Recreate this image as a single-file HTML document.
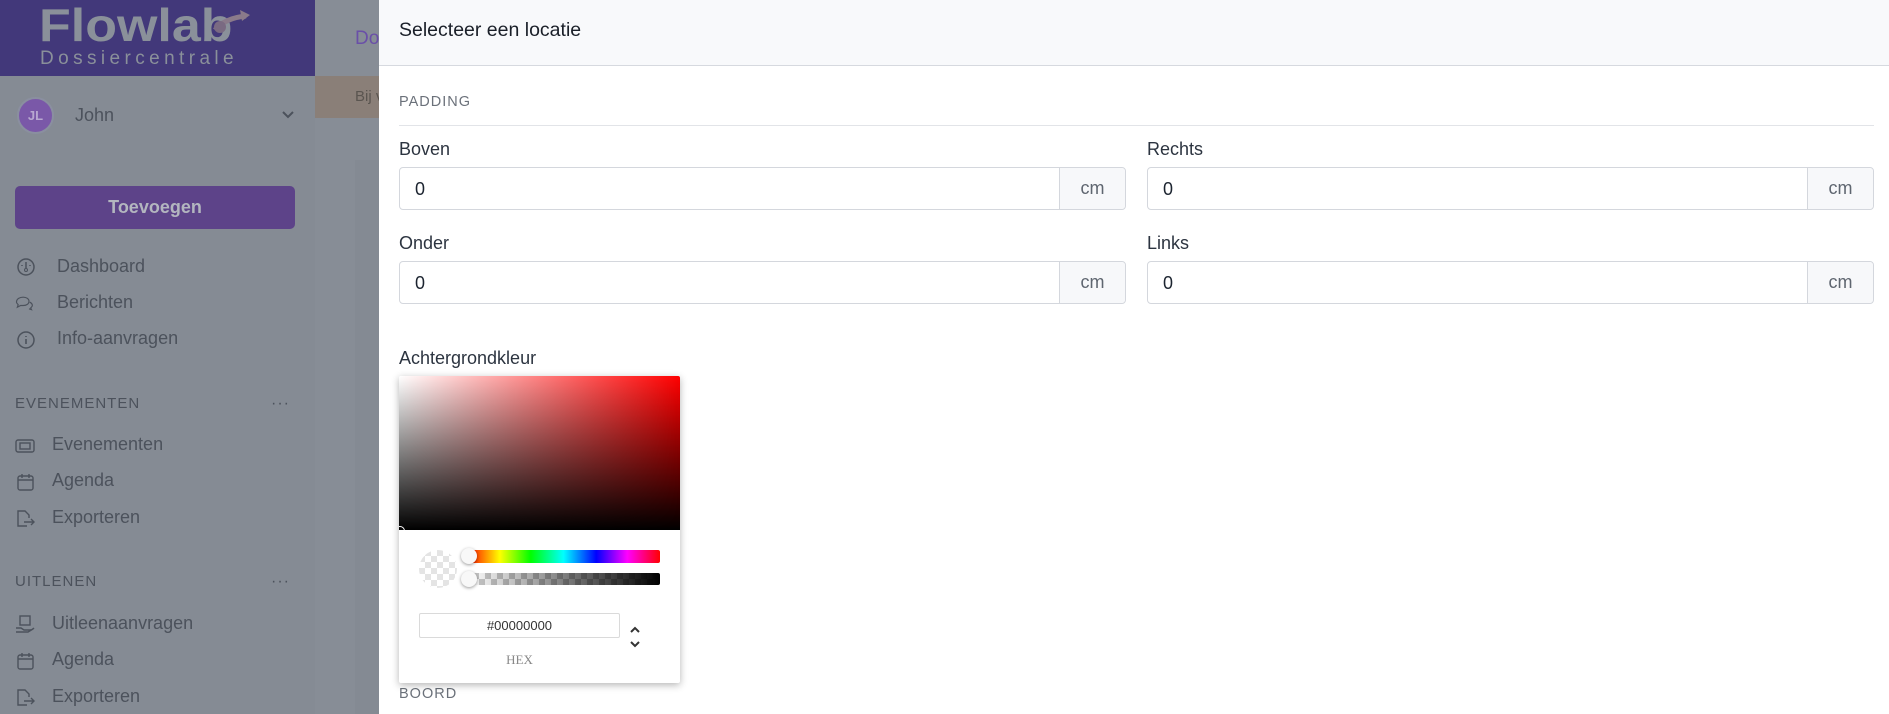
<!DOCTYPE html>
<html><head><meta charset="utf-8"><style>
*{box-sizing:border-box;margin:0;padding:0}
body{width:1889px;height:714px;overflow:hidden;position:relative;font-family:"Liberation Sans",sans-serif;background:#878d96}
.abs{position:absolute}
.sb{left:0;top:0;width:315px;height:714px;background:#858b94}
.logo{left:0;top:0;width:315px;height:76px;background:#42387a}
.nav{color:#4c525c;font-size:18px}
.ico{position:absolute;width:20px;height:20px}
.sec{color:#4c525c;font-size:15px;letter-spacing:1px}
.panel{left:379px;top:0;width:1510px;height:714px;background:#fff}
.lbl{font-size:18px;color:#2c3440}
.inp{border:1px solid #d4d7dd;border-radius:4px;height:43px;background:#fff}
.inp span.v{position:absolute;left:15px;top:11px;font-size:18px;color:#1c2430}
.add{position:absolute;right:0;top:0;bottom:0;width:66px;border-left:1px solid #d4d7dd;background:#f7f8fa;color:#5f6670;font-size:18px;text-align:center;line-height:41px;border-radius:0 4px 4px 0}
</style></head><body>
<div class="abs sb"></div>
<div class="abs logo">
 <div class="abs" style="left:39px;top:-1px;font-size:46px;line-height:52px;font-weight:bold;color:#8a909a;transform:scaleX(1.13);transform-origin:0 0">Flowlab</div>
 <svg class="abs" style="left:208px;top:10px" width="42" height="25"><path d="M7 20 Q17 8 38 6" stroke="#8a7a8a" stroke-width="5" fill="none"/><path d="M32 0 L42 5 L34 11Z" fill="#8a7a8a"/><circle cx="12" cy="17" r="6" fill="#7a6a82"/></svg>
 <div class="abs" style="left:40px;top:48px;font-size:19px;line-height:22px;color:#8a909a;letter-spacing:4.4px">Dossiercentrale</div>
</div>
<div class="abs" style="left:315px;top:76px;width:64px;height:42px;background:#8a7f78"></div>
<div class="abs" style="left:355px;top:28px;color:#6a4fa8;font-size:19px">Do</div>
<div class="abs" style="left:355px;top:88px;color:#5a5550;font-size:15px">Bij v</div>
<div class="abs" style="left:355px;top:160px;width:24px;height:554px;background:#848a93"></div>
<div class="abs" style="left:17px;top:97px;width:37px;height:37px;border-radius:50%;background:#7a58a8;border:2px solid #8a8fa0;color:#b8a8d0;font-size:13px;font-weight:bold;text-align:center;line-height:33px">JL</div>
<div class="abs nav" style="left:75px;top:105px">John</div>
<svg class="abs" style="left:281px;top:110px" width="14" height="10"><path d="M2 2 L7 7 L12 2" stroke="#4c525c" stroke-width="2" fill="none"/></svg>
<div class="abs" style="left:15px;top:186px;width:280px;height:43px;background:#5d4389;border-radius:5px;color:#b3b6bf;font-size:18px;font-weight:bold;text-align:center;line-height:43px">Toevoegen</div>
<svg class="ico" style="left:16px;top:257px" viewBox="0 0 20 20"><circle cx="10" cy="10" r="8" stroke="#4c525c" stroke-width="1.5" fill="none"/><path d="M10 5v6M6 8v1M14 8v1" stroke="#4c525c" stroke-width="1.5"/><circle cx="10" cy="13" r="1.5" stroke="#4c525c" fill="none"/></svg>
<div class="abs nav" style="left:57px;top:256px">Dashboard</div>
<svg class="ico" style="left:14px;top:293px" viewBox="0 0 24 20"><path d="M3 9c0-4 4-6 8-6s7 2 7 5-3 5-7 5c-1 0-2 0-3 0l-4 2 1-3c-1-1-2-2-2-3z" stroke="#4c525c" stroke-width="1.4" fill="none"/><path d="M19 9c2 1 3 2 3 4 0 1-1 2-2 3l1 2-3-1" stroke="#4c525c" stroke-width="1.4" fill="none"/></svg>
<div class="abs nav" style="left:57px;top:292px">Berichten</div>
<svg class="ico" style="left:16px;top:330px" viewBox="0 0 20 20"><circle cx="10" cy="10" r="8" stroke="#4c525c" stroke-width="1.5" fill="none"/><path d="M10 9v5M10 6v1" stroke="#4c525c" stroke-width="1.6"/></svg>
<div class="abs nav" style="left:57px;top:328px">Info-aanvragen</div>
<div class="abs sec" style="left:15px;top:395px">EVENEMENTEN</div>
<div class="abs" style="left:271px;top:395px;color:#4c525c;font-size:16px;letter-spacing:1px">···</div>
<svg class="ico" style="left:15px;top:436px" viewBox="0 0 20 20"><rect x="1" y="4" width="18" height="12" rx="2" stroke="#4c525c" stroke-width="1.4" fill="none"/><rect x="5" y="7" width="10" height="6" stroke="#4c525c" stroke-width="1.4" fill="none"/></svg>
<div class="abs nav" style="left:52px;top:434px">Evenementen</div>
<svg class="ico" style="left:16px;top:472px" viewBox="0 0 20 20"><rect x="2" y="4" width="15" height="14" rx="2" stroke="#4c525c" stroke-width="1.4" fill="none"/><path d="M6 2v4M13 2v4M2 8h15" stroke="#4c525c" stroke-width="1.4"/></svg>
<div class="abs nav" style="left:52px;top:470px">Agenda</div>
<svg class="ico" style="left:15px;top:509px" viewBox="0 0 20 20"><path d="M12 17H3V2h7l4 4v3" stroke="#4c525c" stroke-width="1.4" fill="none"/><path d="M9 13h10M16 10l3 3-3 3" stroke="#4c525c" stroke-width="1.4" fill="none"/></svg>
<div class="abs nav" style="left:52px;top:507px">Exporteren</div>
<div class="abs sec" style="left:15px;top:573px">UITLENEN</div>
<div class="abs" style="left:271px;top:573px;color:#4c525c;font-size:16px;letter-spacing:1px">···</div>
<svg class="ico" style="left:15px;top:615px" viewBox="0 0 20 20"><rect x="5" y="1" width="10" height="9" stroke="#4c525c" stroke-width="1.4" fill="none"/><path d="M1 13h5l3 2h6c2 0 3-1 4-2M1 17h12l5-3" stroke="#4c525c" stroke-width="1.4" fill="none"/></svg>
<div class="abs nav" style="left:52px;top:613px">Uitleenaanvragen</div>
<svg class="ico" style="left:16px;top:651px" viewBox="0 0 20 20"><rect x="2" y="4" width="15" height="14" rx="2" stroke="#4c525c" stroke-width="1.4" fill="none"/><path d="M6 2v4M13 2v4M2 8h15" stroke="#4c525c" stroke-width="1.4"/></svg>
<div class="abs nav" style="left:52px;top:649px">Agenda</div>
<svg class="ico" style="left:15px;top:688px" viewBox="0 0 20 20"><path d="M12 17H3V2h7l4 4v3" stroke="#4c525c" stroke-width="1.4" fill="none"/><path d="M9 13h10M16 10l3 3-3 3" stroke="#4c525c" stroke-width="1.4" fill="none"/></svg>
<div class="abs nav" style="left:52px;top:686px">Exporteren</div>

<div class="abs panel"></div>
<div class="abs" style="left:379px;top:0;width:1510px;height:66px;background:#f8f9fb;border-bottom:1px solid #d6d9df"></div>
<div class="abs" style="left:399px;top:19px;font-size:19.5px;color:#1a1f28">Selecteer een locatie</div>
<div class="abs" style="left:399px;top:94px;font-size:14.5px;color:#6b717a;letter-spacing:1px">PADDING</div>
<div class="abs" style="left:399px;top:125px;width:1475px;height:1px;background:#e2e4e8"></div>
<div class="abs lbl" style="left:399px;top:139px">Boven</div>
<div class="abs lbl" style="left:1147px;top:139px">Rechts</div>
<div class="abs inp" style="left:399px;top:167px;width:727px"><span class="v">0</span><div class="add">cm</div></div>
<div class="abs inp" style="left:1147px;top:167px;width:727px"><span class="v">0</span><div class="add">cm</div></div>
<div class="abs lbl" style="left:399px;top:233px">Onder</div>
<div class="abs lbl" style="left:1147px;top:233px">Links</div>
<div class="abs inp" style="left:399px;top:261px;width:727px"><span class="v">0</span><div class="add">cm</div></div>
<div class="abs inp" style="left:1147px;top:261px;width:727px"><span class="v">0</span><div class="add">cm</div></div>
<div class="abs lbl" style="left:399px;top:348px">Achtergrondkleur</div>
<div class="abs" style="left:399px;top:686px;font-size:14.5px;color:#6b717a;letter-spacing:1px">BOORD</div>

<div class="abs" style="left:399px;top:376px;width:281px;height:307px;background:#fff;box-shadow:0 2px 8px rgba(0,0,0,.3);border-radius:2px;overflow:hidden">
 <div class="abs" style="left:0;top:0;width:281px;height:154px;background:linear-gradient(to top,#000,rgba(0,0,0,0)),linear-gradient(to right,#fff,#f00)"></div>
 <div class="abs" style="left:-4px;top:150px;width:10px;height:10px;border-radius:50%;border:1.5px solid #fff"></div>
 <div class="abs" style="left:20px;top:174px;width:38px;height:38px;border-radius:50%;background-image:repeating-conic-gradient(#e4e4e4 0 25%,#fff 0 50%);background-size:12px 12px"></div>
 <div class="abs" style="left:68px;top:174px;width:193px;height:13px;border-radius:2px;background:linear-gradient(to right,#f00,#ff0 17%,#0f0 33%,#0ff 50%,#00f 67%,#f0f 83%,#f00)"></div>
 <div class="abs" style="left:68px;top:197px;width:193px;height:12px;border-radius:2px;background:linear-gradient(to right,rgba(0,0,0,0),#000),repeating-conic-gradient(#ccc 0 25%,#fff 0 50%) 0 0/12px 12px"></div>
 <div class="abs" style="left:62px;top:172px;width:16px;height:16px;border-radius:50%;background:#f8f8f8;box-shadow:0 1px 3px rgba(0,0,0,.4)"></div>
 <div class="abs" style="left:62px;top:195px;width:16px;height:16px;border-radius:50%;background:#f8f8f8;box-shadow:0 1px 3px rgba(0,0,0,.4)"></div>
 <div class="abs" style="left:20px;top:237px;width:201px;height:25px;border:1px solid #dadada;border-radius:2px;text-align:center;font-size:13px;line-height:23px;color:#333">#00000000</div>
 <svg class="abs" style="left:229px;top:250px" width="14" height="24"><path d="M3 6 L7 2 L11 6M3 16 L7 20 L11 16" stroke="#333" stroke-width="2" fill="none"/></svg>
 <div class="abs" style="left:20px;top:276px;width:201px;text-align:center;font-family:'Liberation Serif',serif;font-size:13px;color:#888">HEX</div>
</div>
</body></html>
